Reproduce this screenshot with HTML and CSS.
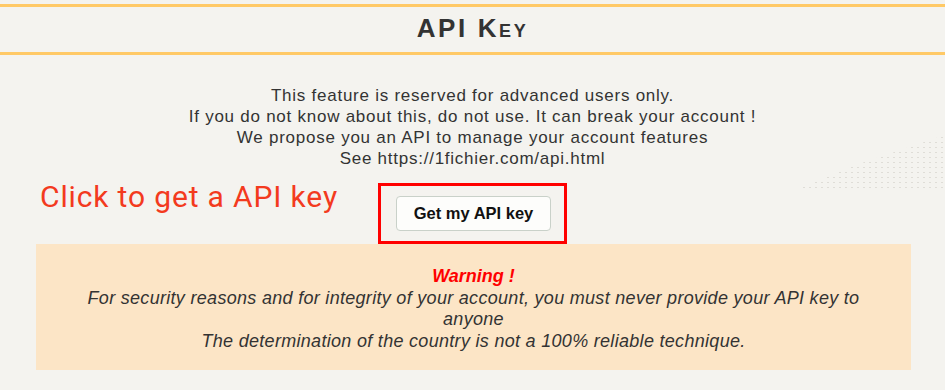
FILE: index.html
```html
<!DOCTYPE html>
<html lang="en">
<head>
    <meta charset="UTF-8">
    <meta name="viewport" content="width=device-width, initial-scale=1.0">
    <title>API Key</title>
    <link rel="stylesheet" href="styles.css">
</head>
<body>
    <div class="dots"></div>
    <h1 class="page-title">API Key</h1>

    <div class="intro">
        This feature is reserved for advanced users only.<br>
        If you do not know about this, do not use. It can break your account !<br>
        We propose you an API to manage your account features<br>
        See https://1fichier.com/api.html
    </div>

    <div class="action-row">
        <span class="hint">Click to get a API key</span>
        <div class="highlight">
            <button type="button" class="btn">Get my API key</button>
        </div>
    </div>

    <div class="warning">
        <strong class="warning-title">Warning !</strong><br>
        For security reasons and for integrity of your account, you must never provide your API key to anyone<br>
        The determination of the country is not a 100% reliable technique.
    </div>
</body>
</html>
```

FILE: styles.css
```css
* {
    margin: 0;
    padding: 0;
    box-sizing: border-box;
}
body {
    font-family: 'Liberation Sans', Arial, sans-serif;
    background: #f4f3ef;
    color: #333;
    padding-top: 4px;
    position: relative;
    height: 390px;
    overflow: hidden;
}
.dots {
    position: absolute;
    right: 0;
    top: 135px;
    width: 150px;
    height: 55px;
    background-image: radial-gradient(#d6d3cc 0.8px, transparent 1px);
    background-size: 6px 5px;
    opacity: 0.7;
    clip-path: polygon(100% 0, 100% 100%, 0 100%, 40% 55%);
}
.page-title {
    position: relative;
    border-top: 3px solid #ffc966;
    border-bottom: 3px solid #ffc966;
    height: 51px;
    line-height: 42px;
    text-align: center;
    font-size: 26px;
    font-weight: bold;
    font-variant: small-caps;
    letter-spacing: 2.6px;
    color: #333;
}
.intro {
    position: relative;
    margin-top: 30px;
    text-align: center;
    font-size: 17px;
    letter-spacing: 0.75px;
    line-height: 21px;
}
.action-row {
    position: relative;
    margin-top: 14px;
    display: flex;
    justify-content: center;
}
.hint {
    position: absolute;
    left: 40px;
    top: -4px;
    font-family: Roboto, 'Liberation Sans', sans-serif;
    font-size: 30px;
    letter-spacing: 0.85px;
    color: #f33a1e;
}
.highlight {
    border: 3px solid #f00;
    width: 189px;
    height: 61px;
    padding: 10px 0 0 15px;
}
.btn {
    width: 155px;
    height: 35px;
    background: #fdfdfb;
    border: 1px solid #c9d1c9;
    border-radius: 4px;
    font-family: 'Liberation Sans', Arial, sans-serif;
    font-size: 16.5px;
    font-weight: bold;
    color: #111;
}
.warning {
    position: relative;
    margin: 0 34px 0 36px;
    height: 126px;
    padding: 22px 40px 0;
    background: #fce5c6;
    text-align: center;
    font-style: italic;
    font-size: 18px;
    letter-spacing: 0.3px;
    line-height: 21.5px;
    color: #333;
}
.warning-title {
    color: #f00;
    font-size: 18px;
    letter-spacing: 0;
}
```
